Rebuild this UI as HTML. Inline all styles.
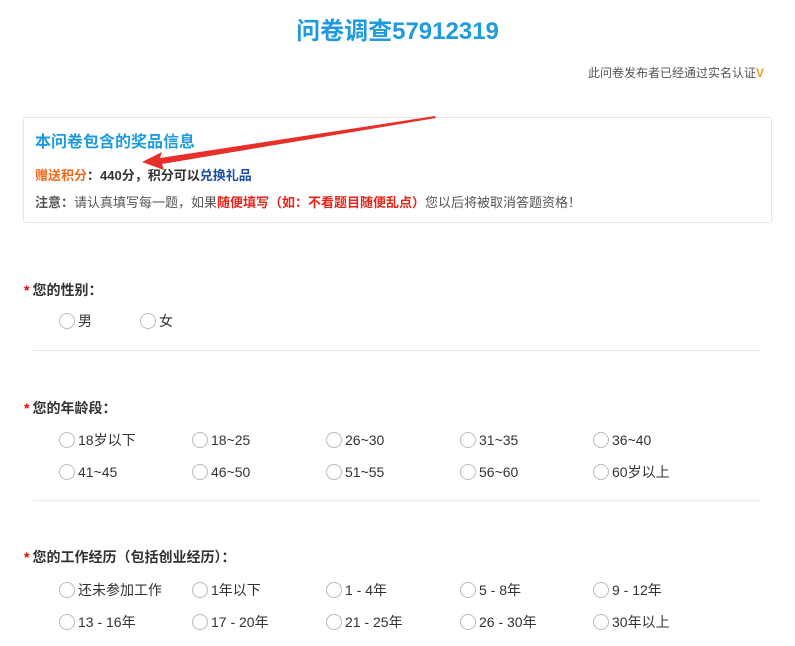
<!DOCTYPE html>
<html><head><meta charset="utf-8"><style>
body{margin:0;width:795px;height:646px;background:#fff;font-family:"Liberation Sans","Noto Sans CJK SC",sans-serif;position:relative;overflow:hidden;color:#333}
.a{position:absolute;white-space:nowrap}
.t{left:0;width:795px;text-align:center;top:11px;font-size:24px;font-weight:bold;color:#1e9ae0}
.box{position:absolute;left:23px;top:117px;width:747px;height:104px;border:1px solid #e6e6e6;border-radius:3px}
.q{font-size:14px;font-weight:bold;color:#333}
.q b{color:#e00;margin-right:3px}
.r{font-size:14px;color:#333;line-height:18px}
.r i{display:inline-block;width:14px;height:14px;border:1px solid #bbb;border-radius:50%;vertical-align:-3px;margin-right:3px}
.hr{position:absolute;left:33px;width:727px;border-top:1px solid #e8e8e8}
</style></head><body>
<div class="a t">问卷调查57912319</div>
<div class="a" style="left:588px;top:64px;font-size:12px;color:#555">此问卷发布者已经通过实名认证<span style="color:#f39a1a;font-weight:bold">V</span></div>
<div class="box"></div>
<div class="a" style="left:35px;top:128px;font-size:16px;font-weight:bold;color:#1e9ae0">本问卷包含的奖品信息</div>
<div class="a" style="left:35px;top:165px;font-size:13px;font-weight:bold"><span style="color:#f06a1a">赠送积分</span>：440分，积分可以<span style="color:#1a4fa0">兑换礼品</span></div>
<div class="a" style="left:35px;top:192px;font-size:13px;color:#555"><b>注意：</b>请认真填写每一题，如果<b style="color:#e8231a">随便填写（如：不看题目随便乱点）</b>您以后将被取消答题资格！</div>
<svg class="a" style="left:0;top:0" width="795" height="646"><polygon points="435,116 160,158 162,152 142,162 164,170 162,164 436,118" fill="#e8302a"/></svg>

<div class="a q" style="left:24px;top:280px"><b>*</b>您的性别：</div>
<div class="a r" style="left:59px;top:312px"><i></i>男</div>
<div class="a r" style="left:140px;top:312px"><i></i>女</div>
<div class="hr" style="top:350px"></div>

<div class="a q" style="left:24px;top:398px"><b>*</b>您的年龄段：</div>
<div class="a r" style="left:59px;top:431px"><i></i>18岁以下</div>
<div class="a r" style="left:192px;top:431px"><i></i>18~25</div>
<div class="a r" style="left:326px;top:431px"><i></i>26~30</div>
<div class="a r" style="left:460px;top:431px"><i></i>31~35</div>
<div class="a r" style="left:593px;top:431px"><i></i>36~40</div>
<div class="a r" style="left:59px;top:463px"><i></i>41~45</div>
<div class="a r" style="left:192px;top:463px"><i></i>46~50</div>
<div class="a r" style="left:326px;top:463px"><i></i>51~55</div>
<div class="a r" style="left:460px;top:463px"><i></i>56~60</div>
<div class="a r" style="left:593px;top:463px"><i></i>60岁以上</div>
<div class="hr" style="top:500px"></div>

<div class="a q" style="left:24px;top:547px"><b>*</b>您的工作经历（包括创业经历）：</div>
<div class="a r" style="left:59px;top:581px"><i></i>还未参加工作</div>
<div class="a r" style="left:192px;top:581px"><i></i>1年以下</div>
<div class="a r" style="left:326px;top:581px"><i></i>1 - 4年</div>
<div class="a r" style="left:460px;top:581px"><i></i>5 - 8年</div>
<div class="a r" style="left:593px;top:581px"><i></i>9 - 12年</div>
<div class="a r" style="left:59px;top:613px"><i></i>13 - 16年</div>
<div class="a r" style="left:192px;top:613px"><i></i>17 - 20年</div>
<div class="a r" style="left:326px;top:613px"><i></i>21 - 25年</div>
<div class="a r" style="left:460px;top:613px"><i></i>26 - 30年</div>
<div class="a r" style="left:593px;top:613px"><i></i>30年以上</div>
</body></html>
